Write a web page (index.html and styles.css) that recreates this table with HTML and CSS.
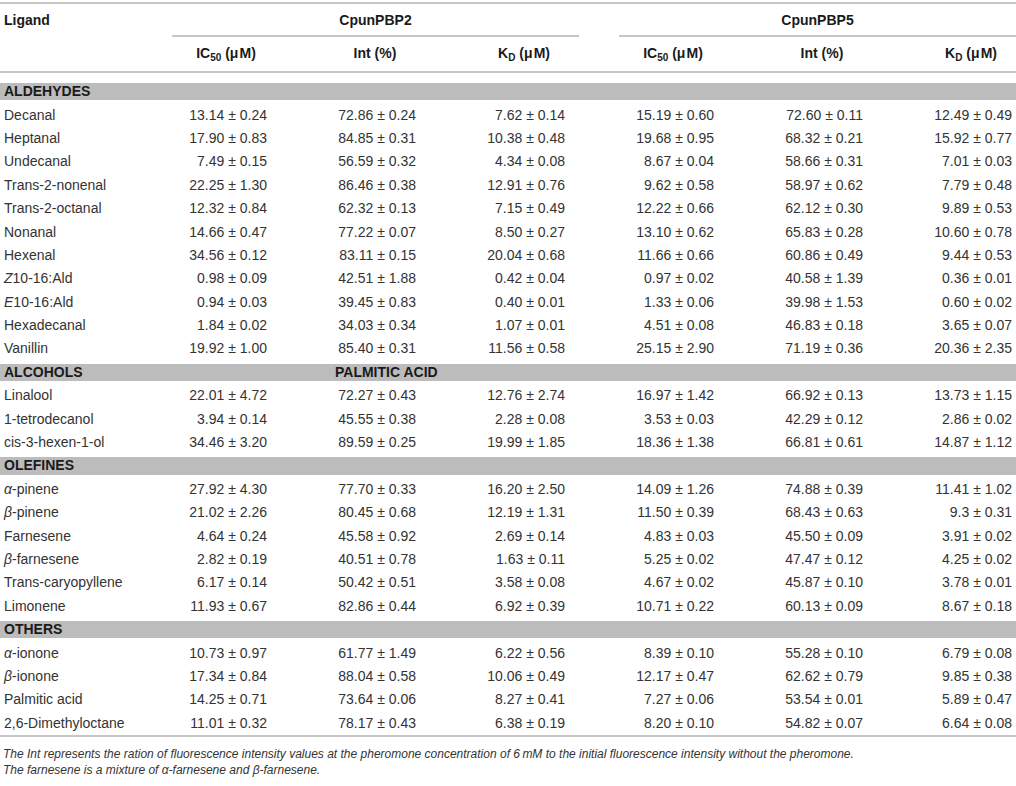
FILE: index.html
```html
<!DOCTYPE html>
<html lang="en">
<head>
    <meta charset="UTF-8">
    <meta name="viewport" content="width=device-width, initial-scale=1.0">
    <title>CpunPBP2 / CpunPBP5 ligand binding</title>
    <link rel="stylesheet" href="styles.css">
</head>
<body>
    <table class="ligand-table">
        <colgroup>
            <col class="col-name">
            <col><col><col><col><col><col>
        </colgroup>
        <thead>
            <tr>
                <th class="head-name" rowspan="2">Ligand</th>
                <th colspan="3"><div class="group-label first">CpunPBP2</div></th>
                <th colspan="3"><div class="group-label">CpunPBP5</div></th>
            </tr>
            <tr class="sub-head">
                <th><span>IC<sub>50</sub> (μ&#8202;M)</span></th>
                <th><span>Int (%)</span></th>
                <th><span>K<sub>D</sub> (μ&#8202;M)</span></th>
                <th><span>IC<sub>50</sub> (μ&#8202;M)</span></th>
                <th><span>Int (%)</span></th>
                <th><span>K<sub>D</sub> (μ&#8202;M)</span></th>
            </tr>
        </thead>
        <tbody>
            <tr class="gap"><td colspan="7"></td></tr>

            <tr class="band"><td colspan="7">ALDEHYDES</td></tr>
            <tr><td class="name">Decanal</td><td>13.14 ± 0.24</td><td>72.86 ± 0.24</td><td>7.62 ± 0.14</td><td>15.19 ± 0.60</td><td>72.60 ± 0.11</td><td>12.49 ± 0.49</td></tr>
            <tr><td class="name">Heptanal</td><td>17.90 ± 0.83</td><td>84.85 ± 0.31</td><td>10.38 ± 0.48</td><td>19.68 ± 0.95</td><td>68.32 ± 0.21</td><td>15.92 ± 0.77</td></tr>
            <tr><td class="name">Undecanal</td><td>7.49 ± 0.15</td><td>56.59 ± 0.32</td><td>4.34 ± 0.08</td><td>8.67 ± 0.04</td><td>58.66 ± 0.31</td><td>7.01 ± 0.03</td></tr>
            <tr><td class="name">Trans-2-nonenal</td><td>22.25 ± 1.30</td><td>86.46 ± 0.38</td><td>12.91 ± 0.76</td><td>9.62 ± 0.58</td><td>58.97 ± 0.62</td><td>7.79 ± 0.48</td></tr>
            <tr><td class="name">Trans-2-octanal</td><td>12.32 ± 0.84</td><td>62.32 ± 0.13</td><td>7.15 ± 0.49</td><td>12.22 ± 0.66</td><td>62.12 ± 0.30</td><td>9.89 ± 0.53</td></tr>
            <tr><td class="name">Nonanal</td><td>14.66 ± 0.47</td><td>77.22 ± 0.07</td><td>8.50 ± 0.27</td><td>13.10 ± 0.62</td><td>65.83 ± 0.28</td><td>10.60 ± 0.78</td></tr>
            <tr><td class="name">Hexenal</td><td>34.56 ± 0.12</td><td>83.11 ± 0.15</td><td>20.04 ± 0.68</td><td>11.66 ± 0.66</td><td>60.86 ± 0.49</td><td>9.44 ± 0.53</td></tr>
            <tr><td class="name"><i>Z</i>10-16:Ald</td><td>0.98 ± 0.09</td><td>42.51 ± 1.88</td><td>0.42 ± 0.04</td><td>0.97 ± 0.02</td><td>40.58 ± 1.39</td><td>0.36 ± 0.01</td></tr>
            <tr><td class="name"><i>E</i>10-16:Ald</td><td>0.94 ± 0.03</td><td>39.45 ± 0.83</td><td>0.40 ± 0.01</td><td>1.33 ± 0.06</td><td>39.98 ± 1.53</td><td>0.60 ± 0.02</td></tr>
            <tr><td class="name">Hexadecanal</td><td>1.84 ± 0.02</td><td>34.03 ± 0.34</td><td>1.07 ± 0.01</td><td>4.51 ± 0.08</td><td>46.83 ± 0.18</td><td>3.65 ± 0.07</td></tr>
            <tr><td class="name">Vanillin</td><td>19.92 ± 1.00</td><td>85.40 ± 0.31</td><td>11.56 ± 0.58</td><td>25.15 ± 2.90</td><td>71.19 ± 0.36</td><td>20.36 ± 2.35</td></tr>

            <tr class="band"><td colspan="2">ALCOHOLS</td><td class="band-extra">PALMITIC ACID</td><td colspan="4"></td></tr>
            <tr><td class="name">Linalool</td><td>22.01 ± 4.72</td><td>72.27 ± 0.43</td><td>12.76 ± 2.74</td><td>16.97 ± 1.42</td><td>66.92 ± 0.13</td><td>13.73 ± 1.15</td></tr>
            <tr><td class="name">1-tetrodecanol</td><td>3.94 ± 0.14</td><td>45.55 ± 0.38</td><td>2.28 ± 0.08</td><td>3.53 ± 0.03</td><td>42.29 ± 0.12</td><td>2.86 ± 0.02</td></tr>
            <tr><td class="name">cis-3-hexen-1-ol</td><td>34.46 ± 3.20</td><td>89.59 ± 0.25</td><td>19.99 ± 1.85</td><td>18.36 ± 1.38</td><td>66.81 ± 0.61</td><td>14.87 ± 1.12</td></tr>

            <tr class="band"><td colspan="7">OLEFINES</td></tr>
            <tr><td class="name"><i>α</i>-pinene</td><td>27.92 ± 4.30</td><td>77.70 ± 0.33</td><td>16.20 ± 2.50</td><td>14.09 ± 1.26</td><td>74.88 ± 0.39</td><td>11.41 ± 1.02</td></tr>
            <tr><td class="name"><i>β</i>-pinene</td><td>21.02 ± 2.26</td><td>80.45 ± 0.68</td><td>12.19 ± 1.31</td><td>11.50 ± 0.39</td><td>68.43 ± 0.63</td><td>9.3 ± 0.31</td></tr>
            <tr><td class="name">Farnesene</td><td>4.64 ± 0.24</td><td>45.58 ± 0.92</td><td>2.69 ± 0.14</td><td>4.83 ± 0.03</td><td>45.50 ± 0.09</td><td>3.91 ± 0.02</td></tr>
            <tr><td class="name"><i>β</i>-farnesene</td><td>2.82 ± 0.19</td><td>40.51 ± 0.78</td><td>1.63 ± 0.11</td><td>5.25 ± 0.02</td><td>47.47 ± 0.12</td><td>4.25 ± 0.02</td></tr>
            <tr><td class="name">Trans-caryopyllene</td><td>6.17 ± 0.14</td><td>50.42 ± 0.51</td><td>3.58 ± 0.08</td><td>4.67 ± 0.02</td><td>45.87 ± 0.10</td><td>3.78 ± 0.01</td></tr>
            <tr><td class="name">Limonene</td><td>11.93 ± 0.67</td><td>82.86 ± 0.44</td><td>6.92 ± 0.39</td><td>10.71 ± 0.22</td><td>60.13 ± 0.09</td><td>8.67 ± 0.18</td></tr>

            <tr class="band"><td colspan="7">OTHERS</td></tr>
            <tr><td class="name"><i>α</i>-ionone</td><td>10.73 ± 0.97</td><td>61.77 ± 1.49</td><td>6.22 ± 0.56</td><td>8.39 ± 0.10</td><td>55.28 ± 0.10</td><td>6.79 ± 0.08</td></tr>
            <tr><td class="name"><i>β</i>-ionone</td><td>17.34 ± 0.84</td><td>88.04 ± 0.58</td><td>10.06 ± 0.49</td><td>12.17 ± 0.47</td><td>62.62 ± 0.79</td><td>9.85 ± 0.38</td></tr>
            <tr><td class="name">Palmitic acid</td><td>14.25 ± 0.71</td><td>73.64 ± 0.06</td><td>8.27 ± 0.41</td><td>7.27 ± 0.06</td><td>53.54 ± 0.01</td><td>5.89 ± 0.47</td></tr>
            <tr><td class="name">2,6-Dimethyloctane</td><td>11.01 ± 0.32</td><td>78.17 ± 0.43</td><td>6.38 ± 0.19</td><td>8.20 ± 0.10</td><td>54.82 ± 0.07</td><td>6.64 ± 0.08</td></tr>
        </tbody>
    </table>

    <div class="notes">
        <p>The Int represents the ration of fluorescence intensity values at the pheromone concentration of 6&#8201;mM to the initial fluorescence intensity without the pheromone.</p>
        <p>The farnesene is a mixture of α-farnesene and β-farnesene.</p>
    </div>
</body>
</html>
```

FILE: styles.css
```css
* {
    margin: 0;
    padding: 0;
    box-sizing: border-box;
}

body {
    font-family: 'Liberation Sans', Arial, Helvetica, sans-serif;
    color: #333;
    background: #fff;
    width: 1016px;
    overflow: hidden;
}

.ligand-table {
    width: 1016px;
    table-layout: fixed;
    border-collapse: separate;
    border-spacing: 0;
    margin-top: 2px;
    border-top: 2px solid #c6c6c6;
    border-bottom: 2px solid #c6c6c6;
    font-size: 14px;
}

.col-name {
    width: 122px;
}

th {
    font-weight: bold;
    color: #1a1a1a;
    white-space: nowrap;
}

sub {
    font-size: 10px;
    line-height: 0;
    vertical-align: -3px;
}

.head-name {
    text-align: left;
    vertical-align: top;
    padding: 7px 0 0 4px;
    line-height: 18px;
    border-bottom: 2px solid #c6c6c6;
}

.group-label {
    margin-left: 50px;
    padding: 7px 0 6px;
    line-height: 18px;
    text-align: center;
    border-bottom: 2px solid #c6c6c6;
}

.group-label.first {
    margin-right: -10px;
}

.sub-head th {
    text-align: right;
    padding: 7px 4px 9px 0;
    line-height: 18px;
    border-bottom: 2px solid #c6c6c6;
}

.sub-head th span {
    display: inline-block;
    width: 82px;
    text-align: center;
}

td {
    height: 23.4px;
    line-height: 17px;
    padding: 0 4px 0 0;
    text-align: right;
    white-space: nowrap;
    vertical-align: middle;
}

td.name {
    text-align: left;
    padding-left: 4px;
}

.gap td {
    height: 7px;
}

.band td {
    background: #bcbcbc;
    border-top: 3px solid #fff;
    border-bottom: 3px solid #fff;
    font-weight: bold;
    color: #1a1a1a;
    text-align: left;
    padding-left: 4px;
}

.band td.band-extra {
    padding-left: 64px;
}

.notes {
    padding: 9px 3px 0;
    font-size: 12px;
    font-style: italic;
    line-height: 16px;
    color: #333;
}
```
